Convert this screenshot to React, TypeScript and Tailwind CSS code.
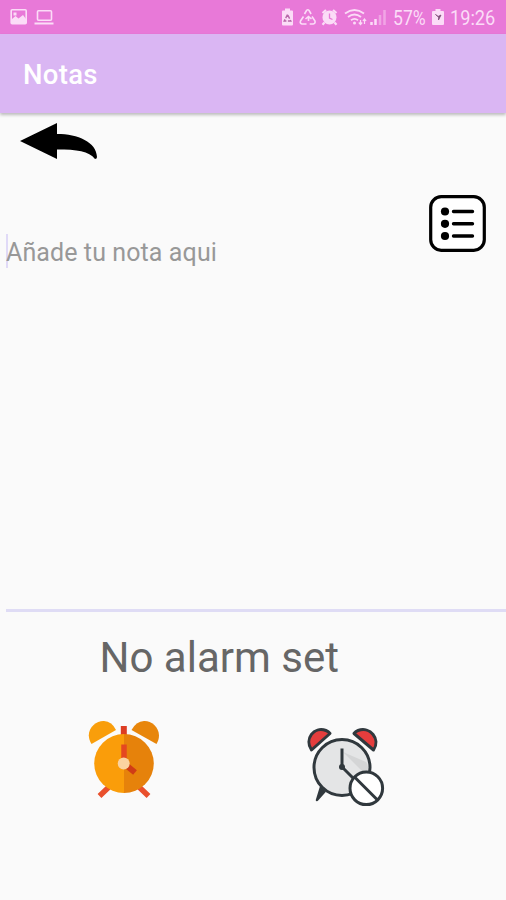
const StatusBar = () => {
	return (
		<div className="flex h-[34px] items-center justify-between bg-[#e879d8] px-2.5 text-[#fbdcf7]">
			<svg width="46" height="20" viewBox="0 0 46 20" fill="none" stroke="currentColor">
				<rect x="1.2" y="2.8" width="15" height="14" rx="1" strokeWidth="1.6" />
				<path d="M2 16V12l3.5-3 3 2.5L13 8l3 4v4z" fill="currentColor" stroke="none" />
				<path d="M3.5 5.5h3v3h-3z" fill="currentColor" stroke="none" />
				<rect x="27.5" y="3.8" width="14" height="9.5" rx="1" strokeWidth="1.6" />
				<path d="M24.5 16.5h19" strokeWidth="2" />
			</svg>
			<div className="flex items-center">
				<svg width="110" height="22" viewBox="0 0 110 22" fill="none" stroke="currentColor" className="mr-[3px]">
					{/* battery saver */}
					<path d="M5 2.5h5v2h2a1 1 0 0 1 1 1v13a1 1 0 0 1-1 1H3a1 1 0 0 1-1-1v-13a1 1 0 0 1 1-1h2z" fill="currentColor" stroke="none" />
					<path d="M7.5 8.5l-3.3 6.5h6.6z" stroke="#b667a8" strokeWidth="1.4" strokeDasharray="4 1.5" />
					{/* recycle */}
					<path d="M24.5 8l2-3.5q1.3-1.5 2.6 0l2 3.5M32 10.5l3 4.5q.6 2.5-1.8 3h-3.5M26.5 18h-4.5q-2.5-.6-1.500-3l3-4.500M25.500 13l3-2.500 3 2.500M28.500 11v4" strokeWidth="1.6" />
					{/* alarm */}
					<circle cx="49.5" cy="11.5" r="7" fill="currentColor" stroke="none" />
					<path d="M42.5 7l3.5-3M56.5 7l-3.5-3M44.5 16.5l-2 2.3M54.5 16.5l2 2.3" strokeWidth="2.2" />
					<path d="M49.5 7.5v4.5l3 1.5" stroke="#e879d8" strokeWidth="1.3" />
					{/* wifi */}
					<path d="M65 7.5q9.5-7 19 0M68 11q6.5-5 13 0M71 14.2q3.5-2.7 7 0" strokeWidth="1.8" />
					<circle cx="74.5" cy="17" r="1.5" fill="currentColor" stroke="none" />
					<path d="M80.500 19v-5M78.800 16.500l1.700 2 1.700-2M84.500 18v-5M82.900 15l1.600-2 1.600 2" strokeWidth="1.2" />
					{/* signal */}
					<path d="M91.500 16v3M95.500 13v6" strokeWidth="2.5" />
					<path d="M100 9v10M104.500 4v15" strokeWidth="2.5" strokeOpacity=".45" />
				</svg>
				<span className="mt-0.5 w-[35px] origin-left scale-x-[.88] whitespace-nowrap text-[20px] leading-none">57%</span>
				<svg width="12" height="18" viewBox="0 0 12 18" className="ml-1 mr-[6px]">
					<path d="M3.5 1h5v2H11a1 1 0 0 1 1 1v12a1 1 0 0 1-1 1H1a1 1 0 0 1-1-1V4a1 1 0 0 1 1-1h2.500z" fill="currentColor" />
					<path d="M3.5 6.5l2.500 2 3-1.500-2.500 5 .2-3z" fill="#7c4b76" stroke="#7c4b76" strokeWidth=".8" />
				</svg>
				<span className="mt-0.5 w-[46px] origin-left scale-x-[.91] whitespace-nowrap text-[20px] leading-none">19:26</span>
			</div>
		</div>
	)
}

const BackArrow = () => (
	<svg width="78" height="38" viewBox="0 0 78 38">
		<path d="M0 19 37 1v11c21 0 39.500 8 40 23q0 2-2 2C69 29 57 27.500 37 27.500V37z" fill="#000" />
	</svg>
)

const ListIcon = () => (
	<svg width="57" height="57" viewBox="0 0 57 57" fill="none" stroke="#000">
		<rect x="1.7" y="1.7" width="53.6" height="53.6" rx="10.5" fill="#fff" strokeWidth="3.2" />
		<path d="M24.5 16.5h19M24.5 28.8h19M24.5 41h19" strokeWidth="3.4" strokeLinecap="round" />
		<g fill="#000" stroke="none">
			<circle cx="16" cy="16.5" r="4.1" />
			<circle cx="16" cy="28.8" r="4.1" />
			<circle cx="16" cy="41" r="4.1" />
		</g>
	</svg>
)

const AlarmIcon = () => (
	<svg width="76" height="82" viewBox="0 0 76 82">
		<path d="M24 67l-10.5 10M52 67l10.5 10" stroke="#e9502d" strokeWidth="5.5" />
		<path d="M5.500 25C-2.500 12 9 1.500 18 2q8 .5 12 9Z" fill="#f99e0b" />
		<path d="M70.500 25C78 12 67 1.500 58 2q-8 .5-12.500 9Z" fill="#e8860b" />
		<path d="M37.8 7v12" stroke="#dd3d23" strokeWidth="6" />
		<path d="M38 15a29.800 29.500 0 0 0 0 59z" fill="#fa9d0a" />
		<path d="M38 15a29.800 29.500 0 0 1 0 59z" fill="#e6820b" />
		<path d="M38 25.500v19" stroke="#e54820" strokeWidth="5.5" />
		<path d="M38 44.500l11 9" stroke="#d03c16" strokeWidth="6" />
		<circle cx="37.7" cy="44.5" r="6" fill="#fbd3a0" />
	</svg>
)

const AlarmOffIcon = () => (
	<svg width="82" height="82" viewBox="0 0 82 82" fill="none" stroke="#30383d" strokeWidth="3">
		<path d="M17 60l-4 13 8-9" fill="#30383d" strokeWidth="2.5" strokeLinejoin="round" />
		<path d="M7.500 23C0 12 10-1 22 3.500q2.500 1 4 3Z" fill="#e43d3d" strokeLinejoin="round" />
		<path d="M69.500 23C77 12 66-1 54 3.500q-2.500 1-4 3Z" fill="#e43d3d" strokeLinejoin="round" />
		<circle cx="38" cy="40.5" r="28" fill="#e4e5e6" />
		<path d="M39 25l23 23q4-9 0-13z" fill="#d4d5d6" stroke="none" />
		<path d="M38 21.500v18.500l13 13" />
		<circle cx="38" cy="40" r="3" fill="#30383d" stroke="none" />
		<circle cx="62.3" cy="61.3" r="16.3" fill="#fff" />
		<path d="M50.500 50l23 23" />
	</svg>
)

export default function App() {
	return (
		<div className="flex h-[900px] w-full flex-col overflow-hidden bg-[#fafafa] font-['Roboto',sans-serif]">
			<StatusBar />
			<header className="flex h-[79px] items-center bg-[#dab6f3] pl-[23px] pt-[3px] shadow-[0_2px_3px_rgba(0,0,0,0.25)]">
				<h1 className="text-[27.5px] font-medium tracking-[0.3px] text-white">Notas</h1>
			</header>

			<main className="flex flex-1 flex-col">
				<div className="flex h-[82px] items-start pl-5 pt-[9px]">
					<button type="button" aria-label="Volver">
						<BackArrow />
					</button>
				</div>

				<div className="ml-1.5 flex h-[417px] justify-between border-b-[3px] border-[#dfdcf5]">
					<div className="mt-[39px] flex h-[34px] items-center border-l-2 border-[#e0daf7]">
						<p className="-ml-0.5 mt-1 whitespace-nowrap text-[25px] tracking-[0.1px] text-[#989898]">Añade tu nota aqui</p>
					</div>
					<button type="button" aria-label="Lista" className="mr-5 h-[57px]">
						<ListIcon />
					</button>
				</div>

				<p className="ml-[99.5px] mt-[15px] text-[42px] leading-[62px] text-[#666]">No alarm set</p>

				<div className="flex pl-[86px] pt-[30px]">
					<button type="button" aria-label="Poner alarma" className="mr-[142px] h-[82px]">
						<AlarmIcon />
					</button>
					<button type="button" aria-label="Quitar alarma" className="mt-[8px] h-[82px]">
						<AlarmOffIcon />
					</button>
				</div>
			</main>
		</div>
	)
}
